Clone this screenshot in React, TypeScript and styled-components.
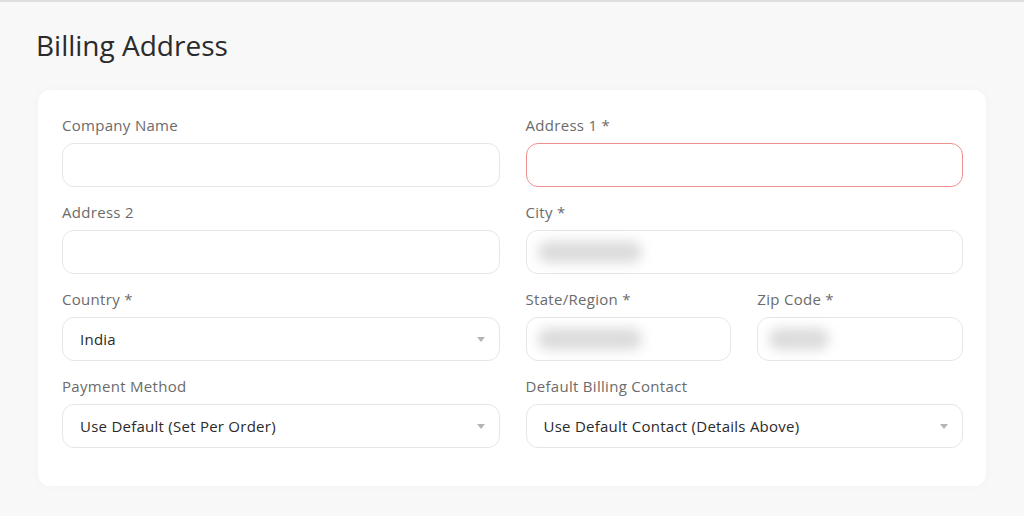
import styled, { createGlobalStyle } from "styled-components";

const GlobalStyle = createGlobalStyle`
  html, body {
    margin: 0;
    padding: 0;
    background: #f8f8f8;
    font-family: "Open Sans", "Noto Sans", sans-serif;
  }
`;

interface FieldConfig {
  label: string;
  value?: string;
  select?: boolean;
  invalid?: boolean;
  blurWidth?: number;
}

const ChevronDown = () => (
  <Arrow width="8" height="5" viewBox="0 0 8 5">
    <path d="M0 0h8L4 5z" fill="#b5b5b5" />
  </Arrow>
);

const Field = ({ label, value, select, invalid, blurWidth }: FieldConfig) => (
  <FieldWrap>
    <Label>{label}</Label>
    <InputBox invalid={invalid ? 1 : 0}>
      {value && <Value>{value}</Value>}
      {blurWidth && <Redacted style={{ width: blurWidth }} />}
      {select && <ChevronDown />}
    </InputBox>
  </FieldWrap>
);

const App = () => {
  return (
    <Page>
      <GlobalStyle />
      <Title>Billing Address</Title>
      <Card>
        <Grid>
          <Field label="Company Name" />
          <Field label="Address 1 *" invalid />
          <Field label="Address 2" />
          <Field label="City *" blurWidth={104} />
          <Field label="Country *" value="India" select />
          <SplitRow>
            <Field label="State/Region *" blurWidth={104} />
            <Field label="Zip Code *" blurWidth={60} />
          </SplitRow>
          <Field label="Payment Method" value="Use Default (Set Per Order)" select />
          <Field
            label="Default Billing Contact"
            value="Use Default Contact (Details Above)"
            select
          />
        </Grid>
      </Card>
    </Page>
  );
};

const Page = styled.div`
  min-height: 516px;
  box-sizing: border-box;
  border-top: 2px solid #dedede;
  padding: 25px 38px 30px 38px;
`;

const Title = styled.h1`
  margin: 0 0 27px -2px;
  font-size: 28px;
  line-height: 36px;
  font-weight: 400;
  color: #2b2b2b;
`;

const Card = styled.div`
  width: 948px;
  box-sizing: border-box;
  background: #ffffff;
  border-radius: 12px;
  box-shadow: 0 0 10px rgba(0, 0, 0, 0.03);
  padding: 25px 23px 38px 24px;
`;

const Grid = styled.div`
  display: grid;
  grid-template-columns: 1fr 1fr;
  column-gap: 26px;
  row-gap: 15px;
`;

const SplitRow = styled.div`
  display: grid;
  grid-template-columns: 1fr 1fr;
  column-gap: 26px;
`;

const FieldWrap = styled.div`
  display: flex;
  flex-direction: column;
  gap: 8px;
`;

const Label = styled.div`
  font-size: 15px;
  line-height: 20px;
  letter-spacing: 0.3px;
  color: #6b6b6b;
`;

const InputBox = styled.div<{ invalid: number }>`
  height: 44px;
  box-sizing: border-box;
  display: flex;
  align-items: center;
  justify-content: space-between;
  padding: 0 14px 0 17px;
  border: 1px solid ${({ invalid }) => (invalid ? "#ef8f8f" : "#e6e6e6")};
  border-radius: 12px;
  background: #ffffff;
`;

const Value = styled.span`
  font-size: 15px;
  font-weight: 500;
  letter-spacing: 0.25px;
  color: #2a2a2a;
`;

const Redacted = styled.div`
  height: 22px;
  margin-left: -6px;
  border-radius: 10px;
  background: #dcdcdc;
  filter: blur(6px);
`;

const Arrow = styled.svg`
  flex-shrink: 0;
  margin-left: auto;
`;

export default App;
